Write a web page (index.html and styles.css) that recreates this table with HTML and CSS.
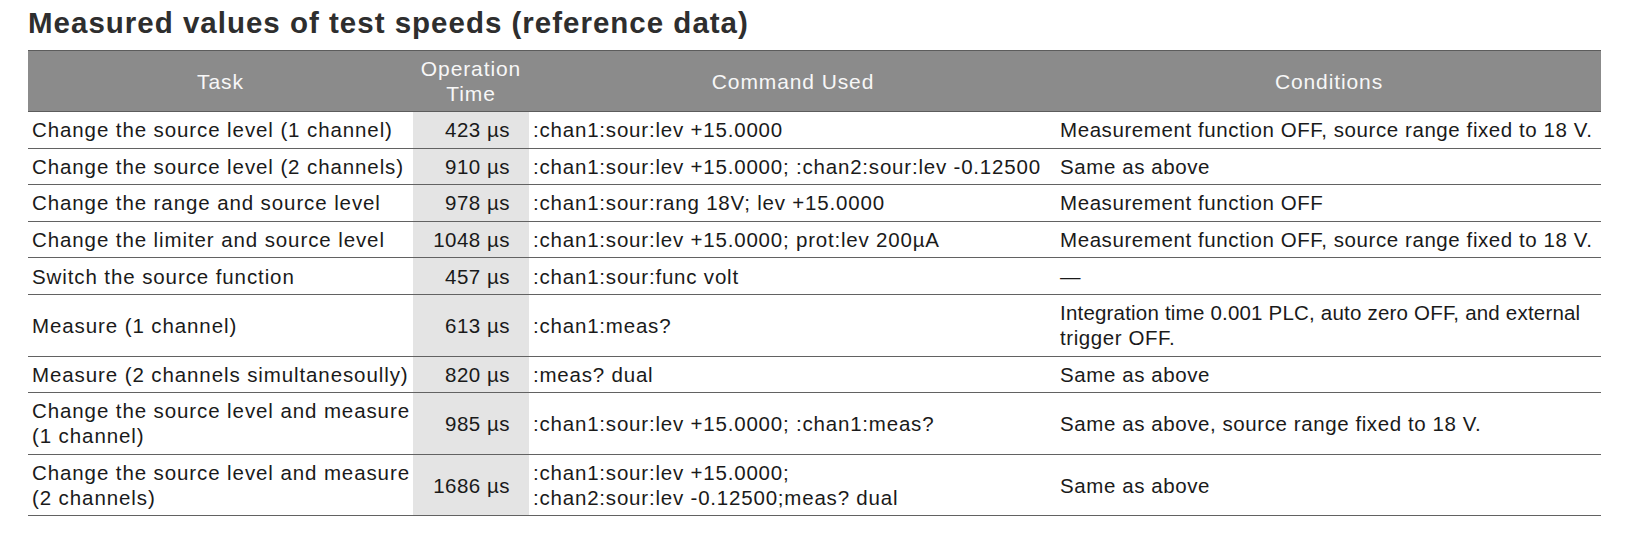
FILE: index.html
```html
<!DOCTYPE html>
<html lang="en">
<head>
<meta charset="utf-8">
<title>Measured values of test speeds</title>
<link rel="stylesheet" href="styles.css">
</head>
<body>
<main class="page">
  <h1 class="title">Measured values of test speeds (reference data)</h1>
  <table class="speeds">
    <colgroup>
      <col class="c-task">
      <col class="c-time">
      <col class="c-cmd">
      <col class="c-cond">
    </colgroup>
    <thead>
      <tr>
        <th>Task</th>
        <th>Operation<br>Time</th>
        <th>Command Used</th>
        <th>Conditions</th>
      </tr>
    </thead>
    <tbody>
      <tr>
        <td class="task">Change the source level (1 channel)</td>
        <td class="time">423 µs</td>
        <td class="cmd">:chan1:sour:lev +15.0000</td>
        <td class="cond">Measurement function OFF, source range fixed to 18 V.</td>
      </tr>
      <tr>
        <td class="task">Change the source level (2 channels)</td>
        <td class="time">910 µs</td>
        <td class="cmd">:chan1:sour:lev +15.0000; :chan2:sour:lev -0.12500</td>
        <td class="cond">Same as above</td>
      </tr>
      <tr>
        <td class="task">Change the range and source level</td>
        <td class="time">978 µs</td>
        <td class="cmd">:chan1:sour:rang 18V; lev +15.0000</td>
        <td class="cond">Measurement function OFF</td>
      </tr>
      <tr>
        <td class="task">Change the limiter and source level</td>
        <td class="time">1048 µs</td>
        <td class="cmd">:chan1:sour:lev +15.0000; prot:lev 200µA</td>
        <td class="cond">Measurement function OFF, source range fixed to 18 V.</td>
      </tr>
      <tr>
        <td class="task">Switch the source function</td>
        <td class="time">457 µs</td>
        <td class="cmd">:chan1:sour:func volt</td>
        <td class="cond">—</td>
      </tr>
      <tr>
        <td class="task">Measure (1 channel)</td>
        <td class="time">613 µs</td>
        <td class="cmd">:chan1:meas?</td>
        <td class="cond"><span class="tight">Integration time 0.001 PLC, auto zero OFF, and external</span><br>trigger OFF.</td>
      </tr>
      <tr>
        <td class="task">Measure (2 channels simultanesoully)</td>
        <td class="time">820 µs</td>
        <td class="cmd">:meas? dual</td>
        <td class="cond">Same as above</td>
      </tr>
      <tr>
        <td class="task">Change the source level and measure<br>(1 channel)</td>
        <td class="time">985 µs</td>
        <td class="cmd">:chan1:sour:lev +15.0000; :chan1:meas?</td>
        <td class="cond">Same as above, source range fixed to 18 V.</td>
      </tr>
      <tr>
        <td class="task">Change the source level and measure<br>(2 channels)</td>
        <td class="time">1686 µs</td>
        <td class="cmd">:chan1:sour:lev +15.0000;<br>:chan2:sour:lev -0.12500;meas? dual</td>
        <td class="cond">Same as above</td>
      </tr>
    </tbody>
  </table>
</main>
</body>
</html>
```

FILE: styles.css
```css
html, body {
  margin: 0;
  padding: 0;
  background: #ffffff;
}

.page {
  padding: 6px 27px 0 28px;
  font-family: "Liberation Sans", Arial, Helvetica, sans-serif;
  color: #1a1a1a;
}

.title {
  margin: 0 0 10px 0;
  font-size: 29.5px;
  line-height: 34px;
  font-weight: bold;
  letter-spacing: 1px;
  color: #2e2e2e;
  white-space: nowrap;
}

.speeds {
  width: 1573px;
  border-collapse: collapse;
  table-layout: fixed;
}

.c-task { width: 385px; }
.c-time { width: 116px; }
.c-cmd  { width: 528px; }
.c-cond { width: 544px; }

.speeds th {
  background: #8b8b8b;
  color: #f7f7f7;
  font-weight: normal;
  font-size: 21px;
  letter-spacing: 0.9px;
  line-height: 25px;
  padding: 5px 4px;
  text-align: center;
  vertical-align: middle;
  border-top: 1px solid #5c5c5c;
  border-bottom: 1px solid #5c5c5c;
}

.speeds td {
  font-size: 20.5px;
  letter-spacing: 0.5px;
  line-height: 25px;
  padding: 5.3px 4px;
  vertical-align: middle;
  border-bottom: 1px solid #626262;
  white-space: nowrap;
  text-align: left;
}

.speeds td.task {
  letter-spacing: 0.9px;
}

.speeds td.time {
  background: #e4e4e4;
  text-align: right;
  padding-right: 19px;
}

.speeds td.cmd {
  letter-spacing: 0.8px;
}

.speeds td.cond {
  padding-left: 3px;
  letter-spacing: 0.58px;
}

.speeds td.cond .tight {
  letter-spacing: 0.2px;
}
```
